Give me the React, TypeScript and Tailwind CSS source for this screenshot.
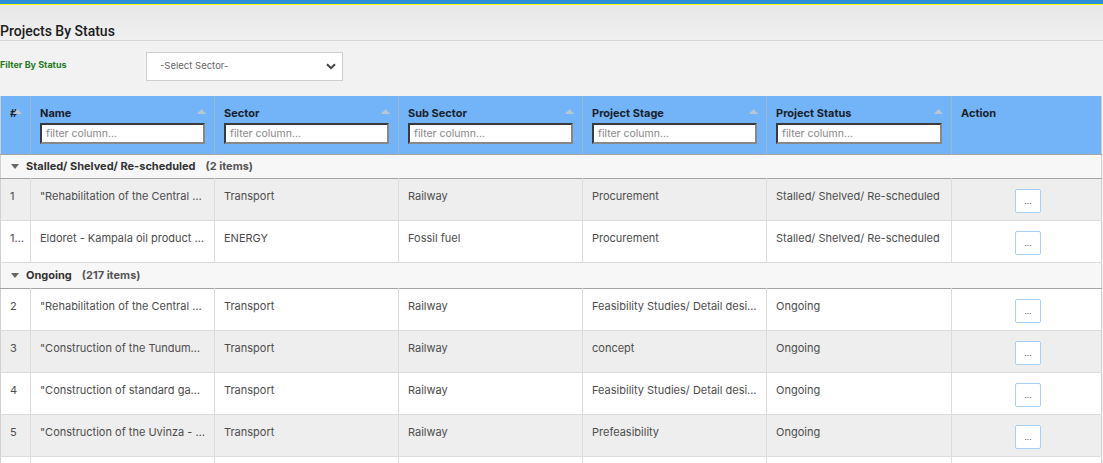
import React from "react";

type Row = {
  no: string;
  name: string;
  sector: string;
  subSector: string;
  stage: string;
  status: string;
};

type Group = {
  label: string;
  count: string;
  rows: Row[];
};

const groups: Group[] = [
  {
    label: "Stalled/ Shelved/ Re-scheduled",
    count: "(2 items)",
    rows: [
      {
        no: "1",
        name: "\"Rehabilitation of the Central Railway Line",
        sector: "Transport",
        subSector: "Railway",
        stage: "Procurement",
        status: "Stalled/ Shelved/ Re-scheduled",
      },
      {
        no: "10",
        name: "Eldoret - Kampala oil product pipeline",
        sector: "ENERGY",
        subSector: "Fossil fuel",
        stage: "Procurement",
        status: "Stalled/ Shelved/ Re-scheduled",
      },
    ],
  },
  {
    label: "Ongoing",
    count: "(217 items)",
    rows: [
      {
        no: "2",
        name: "\"Rehabilitation of the Central Railway Line",
        sector: "Transport",
        subSector: "Railway",
        stage: "Feasibility Studies/ Detail design",
        status: "Ongoing",
      },
      {
        no: "3",
        name: "\"Construction of the Tunduma - Sumbawanga",
        sector: "Transport",
        subSector: "Railway",
        stage: "concept",
        status: "Ongoing",
      },
      {
        no: "4",
        name: "\"Construction of standard gauge railway",
        sector: "Transport",
        subSector: "Railway",
        stage: "Feasibility Studies/ Detail design",
        status: "Ongoing",
      },
      {
        no: "5",
        name: "\"Construction of the Uvinza - Musongati",
        sector: "Transport",
        subSector: "Railway",
        stage: "Prefeasibility",
        status: "Ongoing",
      },
      {
        no: "6",
        name: "\"Construction of the Isaka - Rusumo",
        sector: "Transport",
        subSector: "Railway",
        stage: "Prefeasibility",
        status: "Ongoing",
      },
    ],
  },
];

const filterColumns = ["Name", "Sector", "Sub Sector", "Project Stage", "Project Status"];

function SortArrow() {
  return (
    <svg width="9" height="5" viewBox="0 0 9 5" className="absolute right-[8px] top-[13px]">
      <path d="M0 5L4.5 0L9 5Z" fill="#b9c6d3" />
    </svg>
  );
}

function Caret() {
  return (
    <svg width="8" height="5" viewBox="0 0 8 5" className="shrink-0">
      <path d="M0 0L8 0L4 5Z" fill="#666" />
    </svg>
  );
}

function Cell({ children }: { children: React.ReactNode }) {
  return (
    <td className="h-[42px] truncate border-r border-b border-[#dcdcdc] px-[9px] pt-[9px] align-top">
      {children}
    </td>
  );
}

export default function App() {
  return (
    <div
      className="h-[463px] w-[1103px] overflow-hidden bg-[#f2f2f2] text-[#4d4d4d]"
      style={{ fontFamily: "Inter, 'Noto Sans', sans-serif" }}
    >
      <div className="h-[4px] bg-[#2d8fd4]" />
      <div className="h-px bg-[#ffff00]" />

      <div className="h-[35px] bg-gradient-to-b from-[#e7e7e7] to-[#f0f0f0] pt-[17px]">
        <h1
          className="text-[14px] leading-[18px] font-medium text-[#1c1c1c]"
          style={{ fontFamily: "Roboto, 'Noto Sans', sans-serif" }}
        >
          Projects By Status
        </h1>
      </div>
      <div className="h-px bg-[#d6d6d6]" />

      <div className="flex items-start pt-[11px]">
        <label className="mt-[6px] w-[146px] text-[9px] font-bold text-[#1f7a1f]">Filter By Status</label>
        <div className="flex h-[29px] w-[197px] items-center justify-between border border-[#cfcfcf] bg-white pl-[13px] pr-[6px] text-[9.5px] text-[#666]">
          <span>-Select Sector-</span>
          <svg width="10" height="7" viewBox="0 0 10 7">
            <path d="M1 1.2L5 5.2L9 1.2" stroke="#444" strokeWidth="2" fill="none" />
          </svg>
        </div>
      </div>

      <table className="mt-[15px] w-[1102px] table-fixed border-collapse border-l border-r border-[#d0d0d0] text-[11px]">
        <colgroup>
          <col className="w-[30px]" />
          <col className="w-[184px]" />
          <col className="w-[184px]" />
          <col className="w-[184px]" />
          <col className="w-[184px]" />
          <col className="w-[185px]" />
          <col />
        </colgroup>
        <thead>
          <tr className="h-[58px] bg-[#72b4f7] text-[11px] font-bold text-[#1a1f2b]">
            <th className="relative border-r border-[#9db7cf] pl-[9px] pt-[9px] text-left align-top">
              <div className="leading-[16px]">#</div>
              <SortArrow />
            </th>
            {filterColumns.map((col) => (
              <th
                key={col}
                className="relative border-r border-[#9db7cf] px-[9px] pt-[9px] text-left align-top"
              >
                <div className="leading-[16px]">{col}</div>
                <SortArrow />
                <div className="mt-[2px] h-[21px] border-2 border-[#3a3a3a] border-r-[#888] border-b-[#888] bg-white pl-[4px] text-[10.5px] font-normal leading-[17px] text-[#888]">
                  filter column...
                </div>
              </th>
            ))}
            <th className="px-[9px] pt-[9px] text-left align-top">
              <div className="leading-[16px]">Action</div>
            </th>
          </tr>
        </thead>
        <tbody>
          {groups.map((group, g) => (
            <React.Fragment key={group.label}>
              <tr
                className={`border-t border-b border-[#a4a4a4] bg-[#f7f7f7] ${g === 0 ? "h-[24px]" : "h-[26px]"}`}
              >
                <td colSpan={7} className="pl-[10px]">
                  <div className="flex items-center text-[11px] font-bold">
                    <Caret />
                    <span className="ml-[7px] text-[#333]">{group.label}</span>
                    <span className="ml-[10px] text-[#555]">{group.count}</span>
                  </div>
                </td>
              </tr>
              {group.rows.map((row, i) => {
                const shaded = i % 2 === 0 ? g === 0 : g === 1;
                return (
                  <tr key={row.no} className={shaded ? "bg-[#eeeeee]" : "bg-white"}>
                    <Cell>{row.no}</Cell>
                    <Cell>{row.name}</Cell>
                    <Cell>{row.sector}</Cell>
                    <Cell>{row.subSector}</Cell>
                    <Cell>{row.stage}</Cell>
                    <Cell>{row.status}</Cell>
                    <td className="h-[42px] border-b border-[#dcdcdc] pt-[10px] align-top">
                      <div className="flex justify-center pl-[3px]">
                        <button className="flex h-[24px] w-[26px] items-center justify-center rounded-[2px] border border-[#a8d0f7] bg-white text-[8px] leading-none text-[#333]">
                          ...
                        </button>
                      </div>
                    </td>
                  </tr>
                );
              })}
            </React.Fragment>
          ))}
        </tbody>
      </table>
    </div>
  );
}
